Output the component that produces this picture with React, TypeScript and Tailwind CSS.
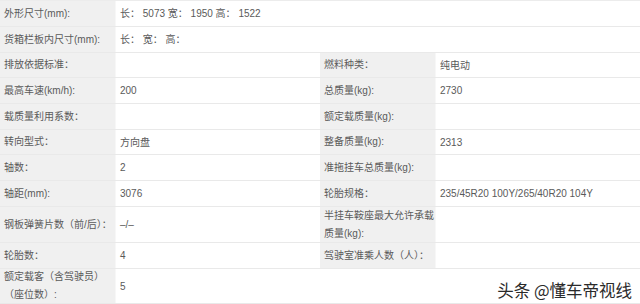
type Cell = { label: string; value: string };

type Row = {
  h: string;
  left: Cell;
  right?: Cell;
  span?: boolean;
  mark?: boolean;
};

const rows: Row[] = [
  { h: "h-[25px]", left: { label: "外形尺寸(mm):", value: "长：\u00a05073 宽：\u00a01950 高：\u00a01522" }, span: true },
  { h: "h-[25px]", left: { label: "货箱栏板内尺寸(mm):", value: "长： 宽： 高：" }, span: true },
  { h: "h-[24px]", left: { label: "排放依据标准：", value: "" }, right: { label: "燃料种类：", value: "纯电动" } },
  { h: "h-[25px]", left: { label: "最高车速(km/h):", value: "200" }, right: { label: "总质量(kg):", value: "2730" } },
  { h: "h-[25px]", left: { label: "载质量利用系数：", value: "" }, right: { label: "额定载质量(kg):", value: "" } },
  { h: "h-[24px]", left: { label: "转向型式：", value: "方向盘" }, right: { label: "整备质量(kg):", value: "2313" } },
  { h: "h-[25px]", left: { label: "轴数：", value: "2" }, right: { label: "准拖挂车总质量(kg):", value: "" } },
  { h: "h-[25px]", left: { label: "轴距(mm):", value: "3076" }, right: { label: "轮胎规格：", value: "235/45R20 100Y/265/40R20 104Y" } },
  { h: "h-[35px]", left: { label: "钢板弹簧片数（前/后）：", value: "–/–" }, right: { label: "半挂车鞍座最大允许承载质量(kg):", value: "" } },
  { h: "h-[25px]", left: { label: "轮胎数：", value: "4" }, right: { label: "驾驶室准乘人数（人）：", value: "" } },
  { h: "h-[34px]", left: { label: "额定载客（含驾驶员）（座位数）:", value: "5" }, mark: true },
];

function Label({ text }: { text: string }) {
  return (
    <div className="w-[116px] shrink-0 flex items-center bg-[#f0f0f0] pl-1 pr-0 leading-[18px] border-r border-[#f7f7f7]">
      {text}
    </div>
  );
}

function Value({ text, wide }: { text: string; wide?: boolean }) {
  return (
    <div className={(wide ? "flex-1" : "w-[204px] shrink-0") + " flex items-center bg-white px-1"}>
      {text}
    </div>
  );
}

export default function App() {
  return (
    <div
      className="w-[640px] h-[304px] bg-white text-[10px] text-[#5a5a5a] overflow-hidden border-t border-[#ececec]"
      style={{ fontFamily: '"Liberation Sans", "Noto Sans CJK SC", sans-serif' }}
    >
      {rows.map((r, i) => (
        <div key={i} className={"flex border-b border-[#e9e9e9] box-content " + r.h}>
          <Label text={r.left.label} />
          <Value text={r.left.value} wide={r.span} />
          {r.right && (
            <>
              <Label text={r.right.label} />
              <Value text={r.right.value} />
            </>
          )}
          {r.mark && (
            <div className="flex-1 flex items-end justify-end pr-[8px] pb-[5px]">
              <span
                className="text-[16.5px] leading-none text-[#2a2a2a]"
                style={{
                  fontFamily: '"Noto Sans CJK SC", sans-serif',
                  textShadow: "0 0 2px #fff, 0 0 2px #fff",
                }}
              >
                头条 @懂车帝视线
              </span>
            </div>
          )}
        </div>
      ))}
    </div>
  );
}
